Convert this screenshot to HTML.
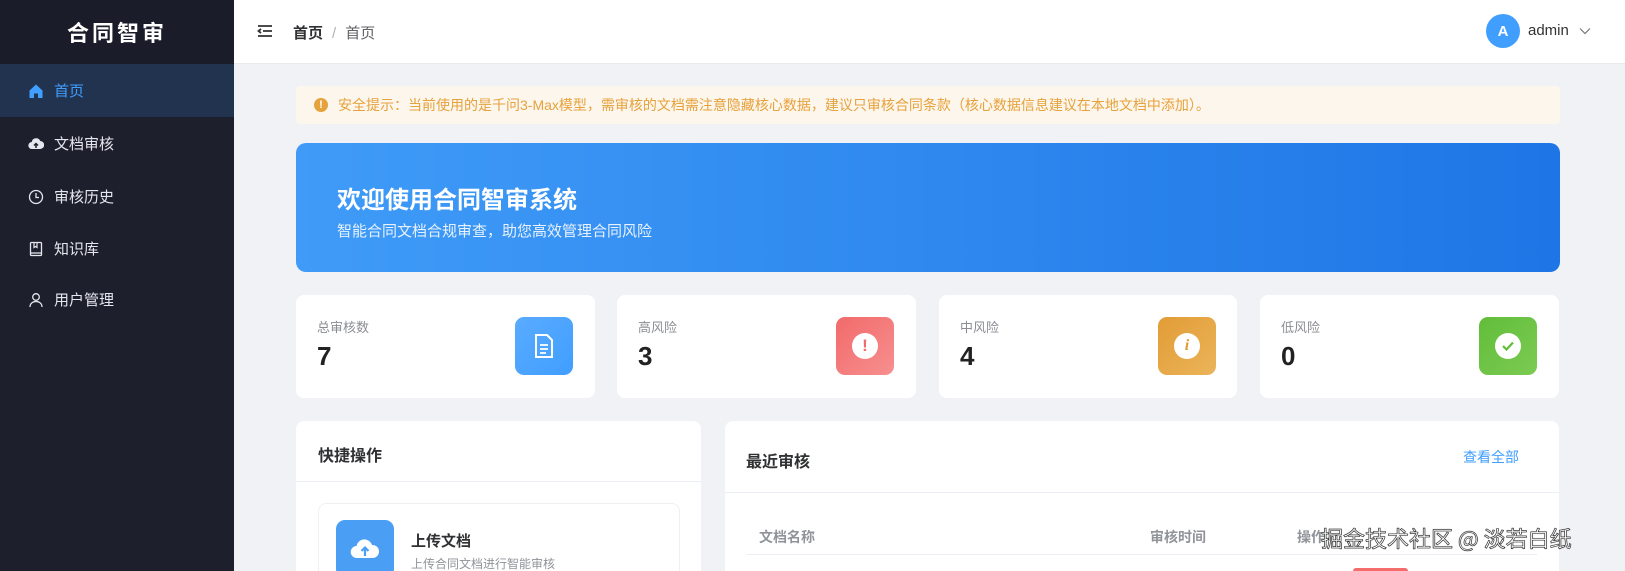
<!DOCTYPE html>
<html style="width:1625px;height:571px;overflow:hidden"><head><meta charset="utf-8"><style>
*{margin:0;padding:0;box-sizing:border-box}
body{width:1625px;height:571px;overflow:hidden;background:#f0f2f5;font-family:"Liberation Sans","Noto Sans CJK SC",sans-serif;position:relative}
.side{position:absolute;left:0;top:0;width:234px;height:571px;background:#1e1f2d}
.logo{height:64px;display:flex;align-items:center;justify-content:center;color:#fff;font-size:22px;font-weight:bold;letter-spacing:3px;background:#1b1c29}
.item{position:absolute;left:0;width:234px;height:53px;display:flex;align-items:center;padding-left:28px;color:#e5e7ee;font-size:15px}
.item svg{width:16px;height:16px;margin-right:10px}
.item.act{background:#223350;color:#409eff}
.hdr{position:absolute;left:234px;top:0;right:0;height:64px;background:#fff;border-bottom:1px solid #e8eaee}
.c{position:absolute;background:#fff;border-radius:8px;overflow:hidden}
.lbl{position:absolute;font-size:13px;color:#8a8d93}
.num{position:absolute;font-size:26px;font-weight:bold;color:#222}
.ib{position:absolute;width:58px;height:58px;border-radius:9px;display:flex;align-items:center;justify-content:center}
</style></head><body>
<div class="side">
<div class="logo">合同智审</div>
<div class="item act" style="top:64px"><svg viewBox="0 0 16 16"><path d="M8 1.5L1.5 7.5V15h4.5v-4.5h4V15h4.5V7.5z" fill="#409eff"/></svg>首页</div>
<div class="item" style="top:117px"><svg viewBox="0 0 16 16"><path d="M4 13a3.5 3.5 0 0 1-.3-7A4.5 4.5 0 0 1 12.3 5 3.5 3.5 0 0 1 12 13z" fill="#e5e7ee"/><path d="M8 12V8M6 9.5L8 7.5l2 2" stroke="#1e1f2d" stroke-width="1.5" fill="none"/></svg>文档审核</div>
<div class="item" style="top:170px"><svg viewBox="0 0 16 16"><circle cx="8" cy="8" r="6.5" stroke="#e5e7ee" stroke-width="1.3" fill="none"/><path d="M8 4v4.5h3" stroke="#e5e7ee" stroke-width="1.3" fill="none"/></svg>审核历史</div>
<div class="item" style="top:222px"><svg viewBox="0 0 16 16"><rect x="2.5" y="1.5" width="11" height="13" rx="1" stroke="#e5e7ee" stroke-width="1.3" fill="none"/><path d="M2.5 12h11M6 1.5v5l1.5-1 1.5 1v-5" stroke="#e5e7ee" stroke-width="1.2" fill="none"/></svg>知识库</div>
<div class="item" style="top:273px"><svg viewBox="0 0 16 16"><circle cx="8" cy="5" r="3.3" stroke="#e5e7ee" stroke-width="1.3" fill="none"/><path d="M2 15c0-3.5 2.7-5.5 6-5.5s6 2 6 5.5" stroke="#e5e7ee" stroke-width="1.3" fill="none"/></svg>用户管理</div>
</div>
<div class="hdr">
<svg style="position:absolute;left:23px;top:24px" width="16" height="14" viewBox="0 0 16 14"><path d="M1 2h14M6 7h9M1 12h14M4 5L1.5 7 4 9" stroke="#333" stroke-width="1.8" fill="none"/></svg>
<div style="position:absolute;left:59px;top:22px;font-size:15px;color:#303133"><b>首页</b><span style="color:#b0b3b8;margin:0 9px">/</span><span style="color:#606266">首页</span></div>
<div style="position:absolute;left:1252px;top:14px;width:34px;height:34px;border-radius:50%;background:#409eff;color:#fff;font-weight:bold;font-size:15px;display:flex;align-items:center;justify-content:center">A</div>
<div style="position:absolute;left:1294px;top:22px;font-size:15px;color:#333">admin</div>
<svg style="position:absolute;left:1345px;top:27px" width="12" height="8" viewBox="0 0 12 8"><path d="M1 1.5l5 5 5-5" stroke="#777" stroke-width="1.2" fill="none"/></svg>
</div>
<div style="position:absolute;left:296px;top:86px;width:1264px;height:38px;background:#fdf6ec;border-radius:4px;color:#e6a23c;font-size:14px;display:flex;align-items:center;padding-left:18px">
<span style="width:14px;height:14px;border-radius:50%;background:#e6a23c;color:#fff;font-size:11px;font-weight:bold;display:inline-flex;align-items:center;justify-content:center;margin-right:10px">!</span>安全提示：当前使用的是千问3-Max模型，需审核的文档需注意隐藏核心数据，建议只审核合同条款（核心数据信息建议在本地文档中添加）。</div>
<div style="position:absolute;left:296px;top:143px;width:1264px;height:129px;border-radius:10px;background:linear-gradient(90deg,#3f9bf7,#1e76e6)">
<div style="position:absolute;left:41px;top:37px;color:#fff;font-size:24px;font-weight:bold">欢迎使用合同智审系统</div>
<div style="position:absolute;left:41px;top:77px;color:#e8f2ff;font-size:15px">智能合同文档合规审查，助您高效管理合同风险</div>
</div>
<div class="c" style="left:296px;top:295px;width:299px;height:103px"><div class="lbl" style="left:21px;top:22px">总审核数</div><div class="num" style="left:21px;top:46px">7</div><div class="ib" style="left:219px;top:22px;background:linear-gradient(135deg,#5aabff,#409eff)"><svg width="24" height="26" viewBox="0 0 24 26"><path d="M4 2h11l5 5v17H4z" stroke="#fff" stroke-width="2" fill="none"/><path d="M8 12h8M8 16h8M8 20h6" stroke="#fff" stroke-width="1.8"/></svg></div></div>
<div class="c" style="left:617px;top:295px;width:299px;height:103px"><div class="lbl" style="left:21px;top:22px">高风险</div><div class="num" style="left:21px;top:46px">3</div><div class="ib" style="left:219px;top:22px;background:linear-gradient(135deg,#f26a6a,#f78f8f)"><div style="width:26px;height:26px;border-radius:50%;background:#fff;color:#f26a6a;font-weight:bold;font-size:17px;display:flex;align-items:center;justify-content:center">!</div></div></div>
<div class="c" style="left:939px;top:295px;width:298px;height:103px"><div class="lbl" style="left:21px;top:22px">中风险</div><div class="num" style="left:21px;top:46px">4</div><div class="ib" style="left:219px;top:22px;background:linear-gradient(135deg,#e29c36,#ebb45a)"><div style="width:26px;height:26px;border-radius:50%;background:#fff;color:#e29c36;font-weight:bold;font-style:italic;font-size:16px;font-family:'Liberation Serif',serif;display:flex;align-items:center;justify-content:center">i</div></div></div>
<div class="c" style="left:1260px;top:295px;width:299px;height:103px"><div class="lbl" style="left:21px;top:22px">低风险</div><div class="num" style="left:21px;top:46px">0</div><div class="ib" style="left:219px;top:22px;background:linear-gradient(135deg,#62bd3a,#7bcb52)"><div style="width:26px;height:26px;border-radius:50%;background:#fff;display:flex;align-items:center;justify-content:center"><svg width="14" height="12" viewBox="0 0 14 12"><path d="M2 6l3.5 3.5L12 2.5" stroke="#62bd3a" stroke-width="2.2" fill="none"/></svg></div></div></div>
<div class="c" style="left:296px;top:421px;width:405px;height:150px;border-radius:8px 8px 0 0">
<div style="position:absolute;left:22px;top:21px;font-size:16px;font-weight:bold;color:#303133">快捷操作</div>
<div style="position:absolute;left:0;right:0;top:60px;border-top:1px solid #ebeef5"></div>
<div style="position:absolute;left:22px;top:82px;width:362px;height:68px;border:1px solid #eef0f4;border-bottom:none;border-radius:8px 8px 0 0;overflow:hidden">
<div style="position:absolute;left:17px;top:16px;width:58px;height:58px;border-radius:9px;background:#4a9ff5;display:flex;align-items:center;justify-content:center"><svg width="30" height="22" viewBox="0 0 30 22"><path d="M7 20a6 6 0 0 1-.5-12A8 8 0 0 1 22 7a6.5 6.5 0 0 1 1 13z" fill="#fff"/><path d="M15 18v-8M11.5 13l3.5-3.5 3.5 3.5" stroke="#4a9ff5" stroke-width="2.2" fill="none"/></svg></div>
<div style="position:absolute;left:92px;top:26px;font-size:15px;font-weight:bold;color:#303133">上传文档</div>
<div style="position:absolute;left:92px;top:51px;font-size:12px;color:#909399">上传合同文档进行智能审核</div>
</div></div>
<div class="c" style="left:725px;top:421px;width:834px;height:150px;border-radius:8px 8px 0 0">
<div style="position:absolute;left:21px;top:27px;font-size:16px;font-weight:bold;color:#303133">最近审核</div>
<div style="position:absolute;left:738px;top:26px;font-size:14px;color:#409eff">查看全部</div>
<div style="position:absolute;left:0;right:0;top:71px;border-top:1px solid #ebeef5"></div>
<div style="position:absolute;left:22px;top:90px;width:790px;height:44px;border-bottom:1px solid #ebeef5;font-size:14px;font-weight:bold;color:#909399">
<span style="position:absolute;left:12px;top:16px">文档名称</span><span style="position:absolute;left:403px;top:16px">审核时间</span><span style="position:absolute;left:550px;top:16px">操作</span></div>
<div style="position:absolute;left:628px;top:147px;width:55px;height:3px;border-radius:4px 4px 0 0;background:#f56c6c"></div>
</div>
<div style="position:absolute;left:1321px;top:523px;font-size:22px;line-height:30px;color:#fff;-webkit-text-stroke:0.6px #222;text-shadow:0 0 1px #333;font-family:'Noto Sans CJK SC',sans-serif">掘金技术社区 @ 淡若白纸</div>
</body></html>
